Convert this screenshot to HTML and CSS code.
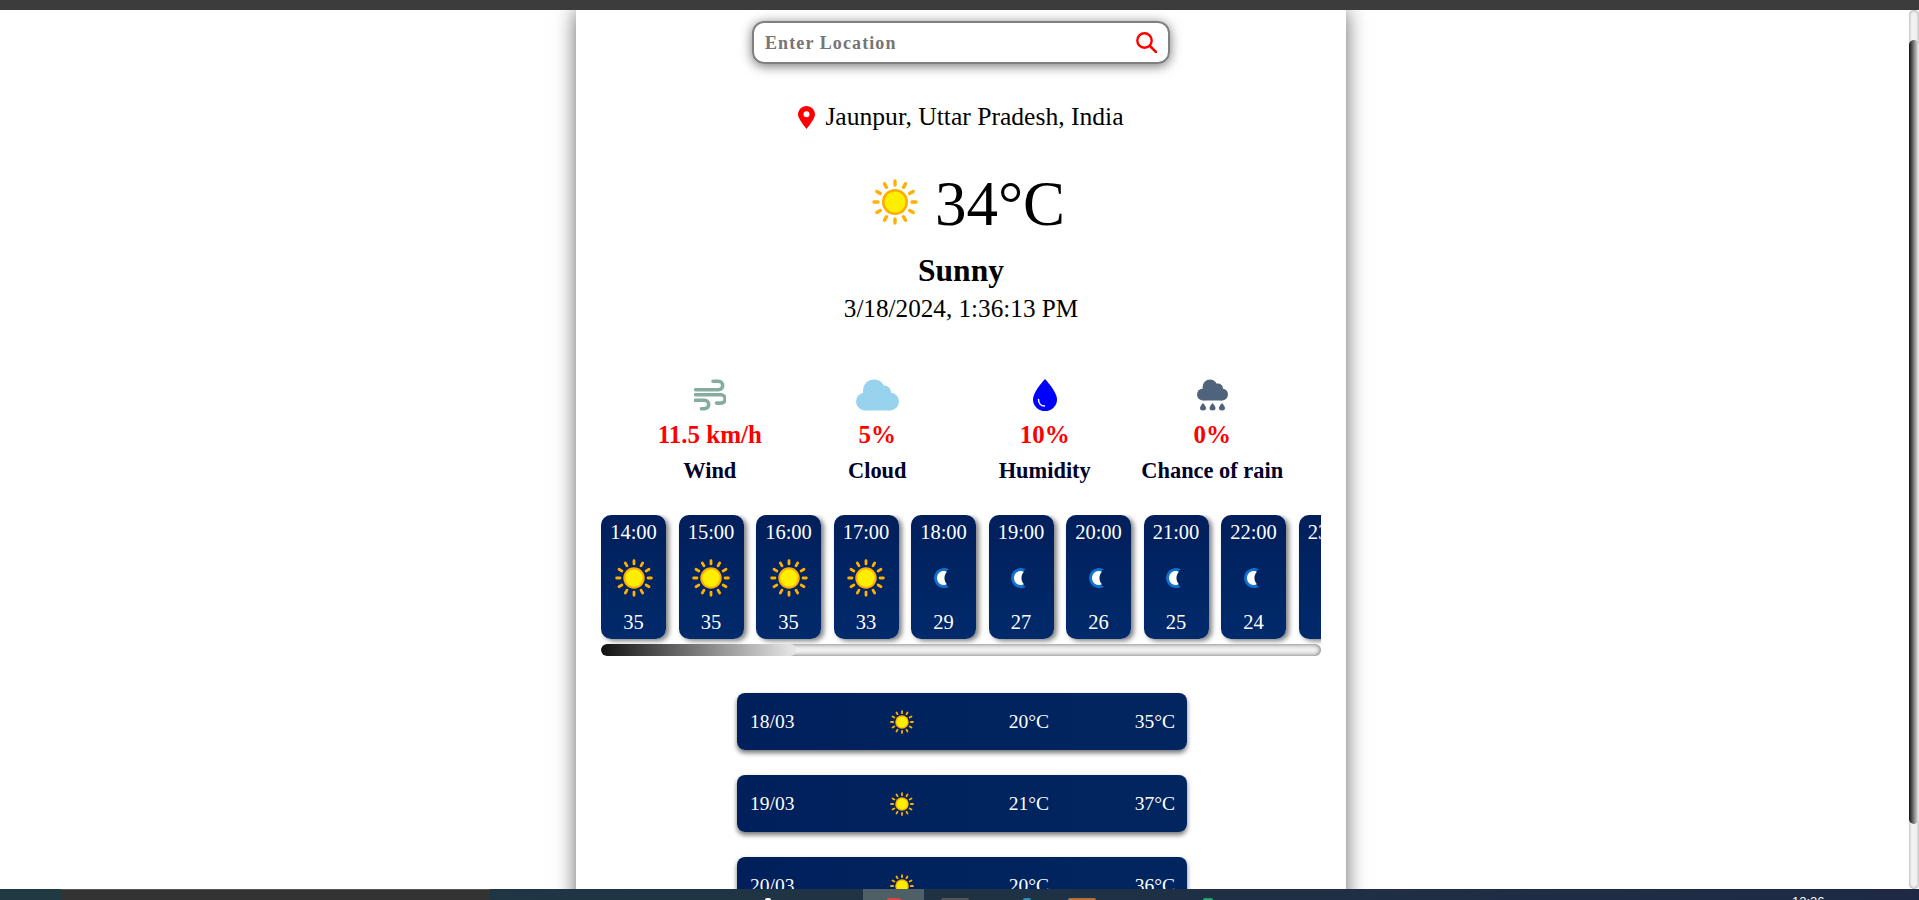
FILE: index.html
```html
<!DOCTYPE html>
<html lang="en">
<head>
    <meta charset="UTF-8">
    <meta name="viewport" content="width=device-width, initial-scale=1.0">
    <title>Weather</title>
    <link rel="stylesheet" href="styles.css">
</head>
<body>
    <svg class="sprites" aria-hidden="true">
        <symbol id="sun" viewBox="0 0 46 46">
            <g stroke="#ffb000" stroke-width="3.4" stroke-linecap="round">
                <path d="M23 2v4M23 40v4M2 23h4M40 23h4"/>
                <path d="M12.5 4.8l2 3.5M31.5 37.7l2 3.5M4.8 12.5l3.5 2M37.7 31.5l3.5 2"/>
                <path d="M33.5 4.8l-2 3.5M14.5 37.7l-2 3.5M41.2 12.5l-3.5 2M8.3 31.5l-3.5 2"/>
            </g>
            <circle cx="23" cy="23" r="13" fill="#ffab00"/>
            <circle cx="23" cy="23" r="10.5" fill="#ffee00"/>
        </symbol>
        <symbol id="moon" viewBox="0 1 16 20">
            <path d="M15 2.340A10 10 0 1 0 15 19.660A7 9 0 0 1 15 2.340z" fill="#1272cf"/>
            <path d="M13 4.680A7 7 0 1 0 13 17.320A5.500 7.500 0 0 1 13 4.680z" fill="#fff"/>
        </symbol>
    </svg>

    <div class="topbar"></div>

    <div class="viewport">
        <main class="card">
            <form class="search">
                <input class="search-input" type="text" placeholder="Enter Location">
                <svg class="search-icon" viewBox="0 0 21 21">
                    <circle cx="8.5" cy="8.5" r="7.2" fill="none" stroke="#f00" stroke-width="2.4"/>
                    <path d="M13.8 13.8L20 20" stroke="#f00" stroke-width="2.6" stroke-linecap="round"/>
                </svg>
            </form>

            <div class="location">
                <svg class="pin" viewBox="0 0 17 23">
                    <path d="M8.5 0C3.8 0 0 3.8 0 8.5 0 12 5.200 18.800 8.500 23 11.800 18.800 17 12 17 8.500 17 3.800 13.200 0 8.500 0z" fill="#f00"/>
                    <circle cx="8.500" cy="8.200" r="3" fill="#fff"/>
                </svg>
                <span>Jaunpur, Uttar Pradesh, India</span>
            </div>

            <div class="current">
                <svg class="current-sun"><use href="#sun"/></svg>
                <span class="current-temp">34°C</span>
            </div>
            <div class="condition">Sunny</div>
            <div class="datetime">3/18/2024, 1:36:13 PM</div>

            <section class="stats">
                <div class="stat">
                    <svg class="stat-icon wind" viewBox="0 0 32 32" fill="none" stroke="#85ad9f" stroke-width="3.6" stroke-linecap="round">
                        <path d="M19 2.300h5.500a4.200 4.200 0 0 1 0 8.400H1.500"/>
                        <path d="M1.500 15.700h25.500a4.200 4.200 0 0 1 0 8.400h-4.500"/>
                        <path d="M1.500 21.300h9a4.200 4.200 0 0 1 0 8.400H7.500"/>
                    </svg>
                    <div class="stat-value">11.5 km/h</div>
                    <div class="stat-label">Wind</div>
                </div>
                <div class="stat">
                    <svg class="stat-icon cloud" viewBox="0 0 43 31" fill="#98d3ee">
                        <circle cx="9" cy="22" r="9"/>
                        <circle cx="18" cy="11" r="11"/>
                        <circle cx="28" cy="13" r="7"/>
                        <circle cx="34" cy="22" r="9"/>
                        <rect x="9" y="14" width="25" height="17"/>
                    </svg>
                    <div class="stat-value">5%</div>
                    <div class="stat-label">Cloud</div>
                </div>
                <div class="stat">
                    <svg class="stat-icon drop" viewBox="0 0 24 32">
                        <path d="M12 0C12 0 24 12.500 24 20.500A12 11.500 0 0 1 0 20.500C0 12.500 12 0 12 0z" fill="#00f"/>
                        <path d="M5.500 20.500C5.500 24.500 8 27 11.500 27" fill="none" stroke="#fff" stroke-width="1.500" stroke-linecap="round"/>
                    </svg>
                    <div class="stat-value">10%</div>
                    <div class="stat-label">Humidity</div>
                </div>
                <div class="stat">
                    <svg class="stat-icon rain" viewBox="0 0 31 31" fill="#4f647c">
                        <circle cx="6" cy="15" r="6"/>
                        <circle cx="13" cy="7.500" r="7.500"/>
                        <circle cx="21" cy="9" r="5"/>
                        <circle cx="25" cy="15" r="6"/>
                        <rect x="6" y="10" width="19" height="11"/>
                        <path d="M6 23.500c0 0 3 3.300 3 5a3 2.500 0 0 1-6 0c0-1.700 3-5 3-5z"/>
                        <path d="M15.500 23.500c0 0 3 3.300 3 5a3 2.500 0 0 1-6 0c0-1.700 3-5 3-5z"/>
                        <path d="M25 23.500c0 0 3 3.300 3 5a3 2.500 0 0 1-6 0c0-1.700 3-5 3-5z"/>
                    </svg>
                    <div class="stat-value">0%</div>
                    <div class="stat-label">Chance of rain</div>
                </div>
            </section>

            <section class="hours">
                <div class="hour"><span>14:00</span><svg class="hour-icon"><use href="#sun"/></svg><span>35</span></div>
                <div class="hour"><span>15:00</span><svg class="hour-icon"><use href="#sun"/></svg><span>35</span></div>
                <div class="hour"><span>16:00</span><svg class="hour-icon"><use href="#sun"/></svg><span>35</span></div>
                <div class="hour"><span>17:00</span><svg class="hour-icon"><use href="#sun"/></svg><span>33</span></div>
                <div class="hour"><span>18:00</span><svg class="hour-icon night"><use href="#moon"/></svg><span>29</span></div>
                <div class="hour"><span>19:00</span><svg class="hour-icon night"><use href="#moon"/></svg><span>27</span></div>
                <div class="hour"><span>20:00</span><svg class="hour-icon night"><use href="#moon"/></svg><span>26</span></div>
                <div class="hour"><span>21:00</span><svg class="hour-icon night"><use href="#moon"/></svg><span>25</span></div>
                <div class="hour"><span>22:00</span><svg class="hour-icon night"><use href="#moon"/></svg><span>24</span></div>
                <div class="hour"><span>23:00</span><svg class="hour-icon night"><use href="#moon"/></svg><span>23</span></div>
            </section>
            <div class="hours-bar"><div class="hours-thumb"></div></div>

            <section class="days">
                <div class="day"><span>18/03</span><svg class="day-icon"><use href="#sun"/></svg><span class="day-low">20°C</span><span>35°C</span></div>
                <div class="day"><span>19/03</span><svg class="day-icon"><use href="#sun"/></svg><span class="day-low">21°C</span><span>37°C</span></div>
                <div class="day"><span>20/03</span><svg class="day-icon"><use href="#sun"/></svg><span class="day-low">20°C</span><span>36°C</span></div>
            </section>
        </main>

        <div class="page-bar"><div class="page-thumb"></div></div>
    </div>

    <footer class="taskbar">
        <div class="task-window"></div>
        <i class="peek peek-white"></i>
        <div class="task-active"><i class="peek peek-red"></i></div>
        <i class="peek peek-gray"></i>
        <i class="peek peek-blue"></i>
        <i class="peek peek-orange"></i>
        <i class="peek peek-green"></i>
        <span class="clock">12:36</span>
    </footer>
</body>
</html>
```

FILE: styles.css
```css
* { box-sizing: border-box; }
html, body { margin: 0; height: 900px; overflow: hidden; }
body { font-family: "Liberation Serif", "Times New Roman", serif; color: #000; background: #fff; }
.sprites { display: none; }

.topbar { height: 10px; background: #3c3c3c; }
.viewport { position: relative; height: 879px; overflow: hidden; }

.card {
    width: 770px;
    min-height: 950px;
    margin-left: 576px;
    padding-top: 11px;
    background: #fff;
    box-shadow: 0 0 20px rgba(0, 0, 0, 0.6);
}

/* search */
.search {
    display: flex;
    align-items: center;
    width: 418px;
    height: 43px;
    margin-left: 176px;
    padding: 0 11px 0 11px;
    border: 2px solid #808080;
    border-radius: 12px;
    box-shadow: 0 2px 12px rgba(0, 0, 0, 0.55);
}
.search-input {
    flex: 1;
    min-width: 0;
    padding: 2px 0 0;
    border: none;
    outline: none;
    font-family: inherit;
    font-size: 18px;
    font-weight: bold;
    letter-spacing: 1.1px;
}
.search-input::placeholder { color: #757575; opacity: 1; }
.search-icon { width: 21px; height: 21px; }

/* current weather */
.location {
    display: flex;
    justify-content: center;
    align-items: center;
    gap: 10px;
    margin-top: 39px;
    font-size: 25.6px;
    line-height: 28px;
}
.pin { width: 17px; height: 23px; }

.current {
    display: flex;
    justify-content: center;
    align-items: center;
    gap: 17px;
    margin-top: 38px;
    padding-left: 15px;
    line-height: 70px;
    font-size: 63px;
}
.current-sun { width: 46px; height: 46px; margin-top: -4px; }
.condition { margin-top: 15px; text-align: center; font-size: 31.5px; font-weight: bold; line-height: 34px; }
.datetime { margin-top: 7px; text-align: center; font-size: 25.2px; line-height: 28px; }

/* stats */
.stats {
    display: grid;
    grid-template-columns: repeat(4, 167.5px);
    margin: 56px 0 0 50px;
}
.stat { text-align: center; }
.stat-icon { display: block; margin: 0 auto; height: 32px; }
.wind { width: 32px; }
.cloud { width: 43px; }
.drop { width: 24px; }
.rain { width: 31px; }
.stat-value { margin-top: 10px; font-size: 25px; font-weight: bold; line-height: 28px; color: #f00; }
.stat-label { margin-top: 9px; font-size: 22.4px; font-weight: bold; line-height: 26px; color: #00002a; }

/* hourly */
.hours {
    display: flex;
    gap: 12.5px;
    width: 720px;
    margin: 31px 0 0 25px;
    padding-bottom: 5px;
    overflow: hidden;
}
.hour {
    display: flex;
    flex: none;
    flex-direction: column;
    align-items: center;
    justify-content: space-between;
    width: 65px;
    height: 124px;
    padding: 6px 0 5px;
    border-radius: 10px;
    font-size: 20.5px;
    color: #fff;
    background: linear-gradient(180deg, #011f5b, #012a6b);
    box-shadow: 3px 2px 5px rgba(0, 0, 0, 0.5);
}
.hour-icon { width: 38px; height: 38px; }
.hour-icon.night { width: 16px; height: 20px; margin: 9px 4px 9px 0; }

.hours-bar {
    width: 720px;
    height: 12px;
    margin-left: 25px;
    border-radius: 6px;
    background: #f1f1f1;
    box-shadow: inset 0 0 5px rgba(0, 0, 0, 0.6);
    overflow: hidden;
}
.hours-thumb { width: 195px; height: 12px; border-radius: 6px; background: linear-gradient(90deg, #111, #e8e8e8); }

/* daily */
.days {
    display: flex;
    flex-direction: column;
    align-items: center;
    gap: 25px;
    margin-top: 37px;
    padding-left: 2px;
}
.day {
    display: flex;
    align-items: center;
    justify-content: space-between;
    width: 450px;
    height: 57px;
    padding: 0 12px 0 13px;
    border-radius: 8px;
    font-size: 19.5px;
    color: #fff;
    background: linear-gradient(90deg, #00205c, #01265f);
    box-shadow: 0 3px 5px rgba(0, 0, 0, 0.55);
}
.day-icon { width: 50px; height: 24px; }
.day-low { margin-right: 3.6px; }

/* browser scrollbar */
.page-bar {
    position: absolute;
    top: 0;
    right: 0;
    width: 10px;
    height: 879px;
    border-radius: 5px;
    background: #f1f1f1;
    box-shadow: inset 0 0 3px rgba(0, 0, 0, 0.45);
}
.page-thumb {
    height: 784px;
    margin-top: 30px;
    border-radius: 5px;
    background: linear-gradient(90deg, #111, #f2f2f2);
}

/* desktop taskbar, mostly cut off at the bottom */
.taskbar {
    display: flex;
    height: 11px;
    overflow: hidden;
    background: linear-gradient(90deg, #203a43, #1e2a45);
}
.task-window { width: 429px; margin-left: 61px; background: #333; border-top: 1px solid #555; }
.task-active { display: flex; justify-content: center; width: 61px; margin-left: 92px; padding-top: 9px; background: #4f5f66; }
.peek { display: block; flex: none; height: 2px; margin-top: 9px; border-radius: 4px 4px 0 0; }
.task-active .peek { margin-top: 0; }
.peek-white { width: 6px; margin-left: 275px; background: #fff; }
.peek-red { width: 14px; background: #d9453a; }
.peek-gray { width: 28px; margin-left: 17px; background: #555; }
.peek-blue { width: 8px; margin-left: 54px; background: #2a90c8; }
.peek-orange { width: 28px; margin-left: 37px; background: #b5703a; }
.peek-green { width: 10px; margin-left: 107px; background: #1fa463; }
.clock { margin: 6px 0 0 579px; font-family: "Liberation Sans", sans-serif; font-size: 13px; line-height: 14px; color: #fff; }
```
